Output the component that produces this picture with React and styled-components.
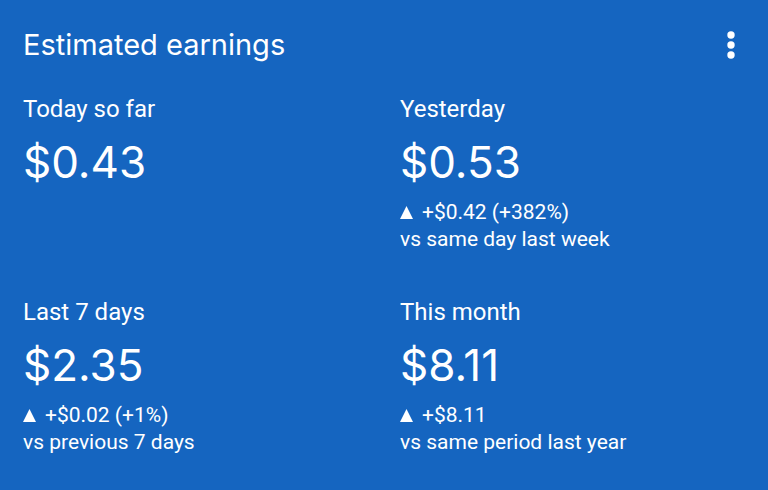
import React from "react";
import styled, { createGlobalStyle } from "styled-components";

const GlobalStyle = createGlobalStyle`
  *, *::before, *::after { box-sizing: border-box; }
  body { margin: 0; background: #1565c0; }
`;

const Card = styled.section`
  min-height: 100vh;
  padding: 25px 23px 32px 23px;
  background: #1565c0;
  color: #fff;
  font-family: Roboto, "Liberation Sans", sans-serif;
`;

const Header = styled.header`
  display: flex;
  align-items: center;
  justify-content: space-between;
  height: 40px;
`;

const Title = styled.h1`
  margin: 0;
  font: 400 29px/40px Inter, Roboto, sans-serif;
`;

const MenuButton = styled.button`
  display: flex;
  justify-content: center;
  width: 28px;
  padding: 0;
  border: 0;
  background: none;
  color: inherit;
  cursor: pointer;
`;

const Metrics = styled.div`
  display: grid;
  grid-template-columns: 1fr 1fr;
  column-gap: 32px;
  row-gap: 43px;
  margin-top: 28px;
`;

const Label = styled.h2`
  margin: 0;
  font-size: 24px;
  font-weight: 400;
  line-height: 32px;
`;

const Amount = styled.p`
  margin: 10px 0;
  font: 400 44px/54px Inter, Roboto, sans-serif;
`;

const Change = styled.p`
  display: flex;
  align-items: center;
  gap: 9px;
  margin: 0;
  font-size: 21px;
  line-height: 27px;
`;

const Comparison = styled.p`
  margin: 0;
  font-size: 21px;
  line-height: 27px;
`;

const metrics = [
  { label: "Today so far", amount: "$0.43" },
  { label: "Yesterday", amount: "$0.53", change: "+$0.42 (+382%)", comparison: "vs same day last week" },
  { label: "Last 7 days", amount: "$2.35", change: "+$0.02 (+1%)", comparison: "vs previous 7 days" },
  { label: "This month", amount: "$8.11", change: "+$8.11", comparison: "vs same period last year" },
];

function Metric({ label, amount, change, comparison }) {
  return (
    <article>
      <Label>{label}</Label>
      <Amount>{amount}</Amount>
      {change && (
        <Change>
          <svg width="13" height="13" viewBox="0 0 13 13" aria-hidden="true">
            <path d="M6.5 0 13 13H0Z" fill="currentColor" />
          </svg>
          {change}
        </Change>
      )}
      {comparison && <Comparison>{comparison}</Comparison>}
    </article>
  );
}

export default function App() {
  return (
    <Card>
      <GlobalStyle />
      <Header>
        <Title>Estimated earnings</Title>
        <MenuButton type="button" aria-label="More options">
          <svg width="8" height="28" viewBox="0 0 8 28" fill="currentColor" aria-hidden="true">
            <circle cx="4" cy="4" r="3.7" />
            <circle cx="4" cy="14" r="3.7" />
            <circle cx="4" cy="24" r="3.7" />
          </svg>
        </MenuButton>
      </Header>
      <Metrics>
        {metrics.map((metric) => <Metric key={metric.label} {...metric} />)}
      </Metrics>
    </Card>
  );
}
